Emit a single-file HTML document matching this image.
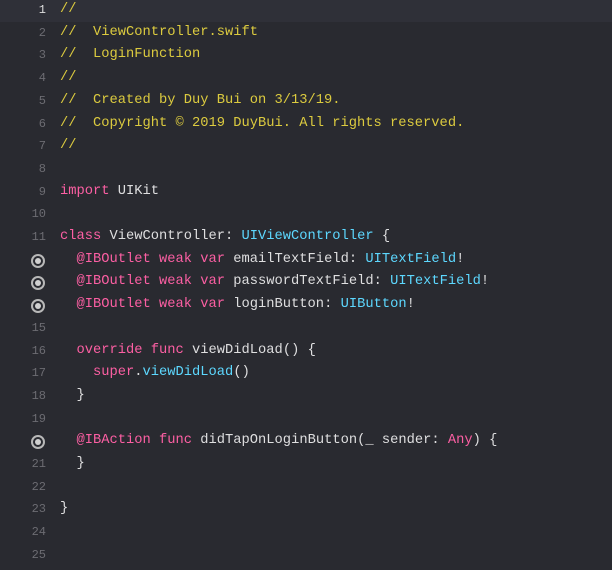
<!DOCTYPE html>
<html><head><meta charset="utf-8"><style>
html,body{margin:0;padding:0;background:#292a30;width:612px;height:570px;overflow:hidden}
.wrap{position:relative;width:612px;height:570px;font-family:"Liberation Mono",monospace;font-size:13.75px}
.l{position:absolute;left:0;width:612px;height:22.7px;line-height:22.7px;white-space:pre;color:#dfdfe0}
.n{position:absolute;left:0;width:46px;text-align:right;color:#6c6c72;font-size:12px}
.c{position:absolute;left:60px}
.hl{background:#2f3038}
.hl .n{color:#ddd}
.y{color:#dccb3f}
.k{color:#fc5fa3}
.t{color:#5dd8ff}
.dot{position:absolute;left:31px;top:5px;width:10px;height:10px;border:2px solid #b8b8b8;border-radius:50%;}
.dot::after{content:"";position:absolute;left:2px;top:2px;width:6px;height:6px;border-radius:50%;background:#d0d0d0}
</style></head><body><div class="wrap">
<div class="l hl" style="top:-1px"><span class="n">1</span><span class="c y">//</span></div>
<div class="l" style="top:21.7px"><span class="n">2</span><span class="c y">//  ViewController.swift</span></div>
<div class="l" style="top:44.4px"><span class="n">3</span><span class="c y">//  LoginFunction</span></div>
<div class="l" style="top:67.1px"><span class="n">4</span><span class="c y">//</span></div>
<div class="l" style="top:89.8px"><span class="n">5</span><span class="c y">//  Created by Duy Bui on 3/13/19.</span></div>
<div class="l" style="top:112.5px"><span class="n">6</span><span class="c y">//  Copyright © 2019 DuyBui. All rights reserved.</span></div>
<div class="l" style="top:135.2px"><span class="n">7</span><span class="c y">//</span></div>
<div class="l" style="top:157.9px"><span class="n">8</span></div>
<div class="l" style="top:180.6px"><span class="n">9</span><span class="c"><span class="k">import</span> UIKit</span></div>
<div class="l" style="top:203.3px"><span class="n">10</span></div>
<div class="l" style="top:226px"><span class="n">11</span><span class="c"><span class="k">class</span> ViewController: <span class="t">UIViewController</span> {</span></div>
<div class="l" style="top:248.7px"><span class="dot"></span><span class="c">  <span class="k">@IBOutlet weak var</span> emailTextField: <span class="t">UITextField</span>!</span></div>
<div class="l" style="top:271.4px"><span class="dot"></span><span class="c">  <span class="k">@IBOutlet weak var</span> passwordTextField: <span class="t">UITextField</span>!</span></div>
<div class="l" style="top:294.1px"><span class="dot"></span><span class="c">  <span class="k">@IBOutlet weak var</span> loginButton: <span class="t">UIButton</span>!</span></div>
<div class="l" style="top:316.8px"><span class="n">15</span></div>
<div class="l" style="top:339.5px"><span class="n">16</span><span class="c">  <span class="k">override func</span> viewDidLoad() {</span></div>
<div class="l" style="top:362.2px"><span class="n">17</span><span class="c">    <span class="k">super</span>.<span class="t">viewDidLoad</span>()</span></div>
<div class="l" style="top:384.9px"><span class="n">18</span><span class="c">  }</span></div>
<div class="l" style="top:407.6px"><span class="n">19</span></div>
<div class="l" style="top:430.3px"><span class="dot"></span><span class="c">  <span class="k">@IBAction func</span> didTapOnLoginButton(_ sender: <span class="k">Any</span>) {</span></div>
<div class="l" style="top:453px"><span class="n">21</span><span class="c">  }</span></div>
<div class="l" style="top:475.7px"><span class="n">22</span></div>
<div class="l" style="top:498.4px"><span class="n">23</span><span class="c">}</span></div>
<div class="l" style="top:521.1px"><span class="n">24</span></div>
<div class="l" style="top:543.8px"><span class="n">25</span></div>
</div></body></html>
